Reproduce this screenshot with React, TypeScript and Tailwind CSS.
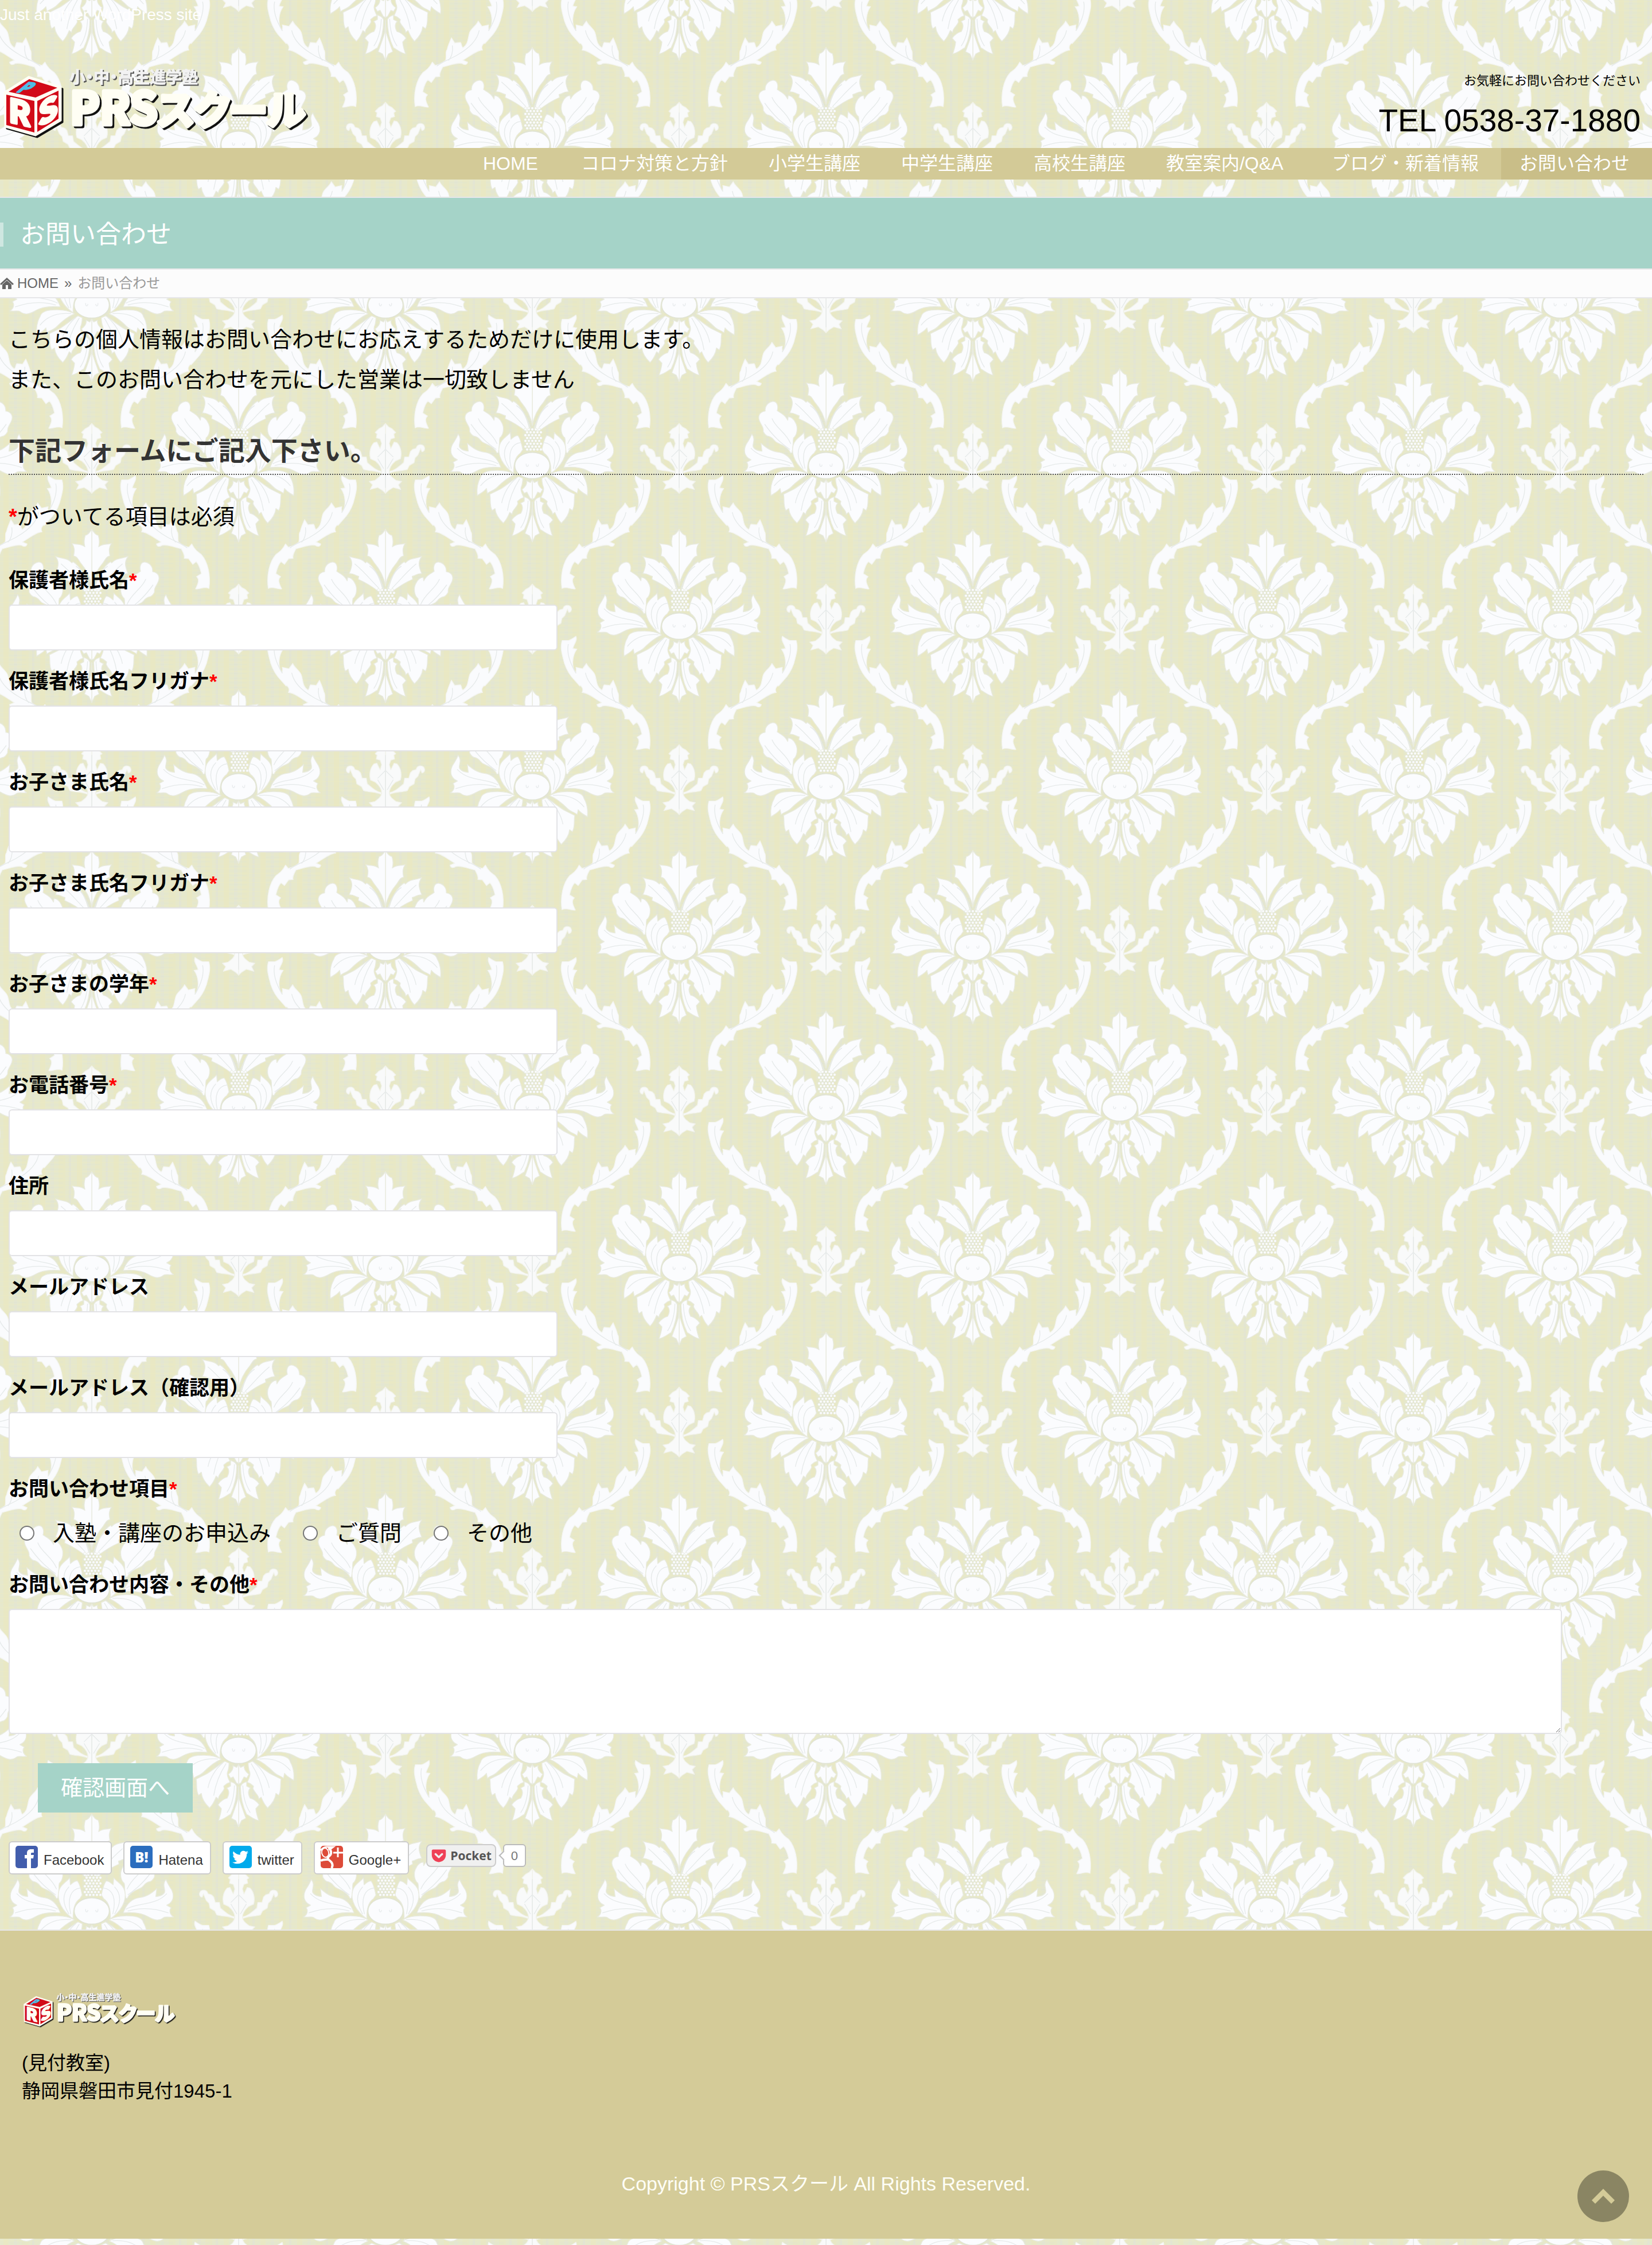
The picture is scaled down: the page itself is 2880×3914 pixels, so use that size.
import React from "react";
import { FaGetPocket, FaTwitter } from "react-icons/fa";

/* ---------- Damask wallpaper ---------- */

const petals = [
  "M0 38 C10 55 20 68 34 70 C40 90 42 108 36 130 C58 112 78 120 103 112 C88 135 90 150 95 178 C76 180 72 196 60 212 C36 240 8 285 0 335 Z",
  "M14 355 C30 290 55 235 98 208 L104 214 C126 188 160 192 190 180 C172 205 170 225 190 270 C165 268 158 282 140 284 L142 300 C100 318 60 345 30 368 Z",
  "M178 478 C168 440 175 420 170 400 C150 385 145 345 160 320 C170 300 185 290 198 290 L200 308 C215 280 230 275 255 258 C248 235 255 208 280 210 C305 215 320 235 318 260 C350 265 360 290 345 318 C335 340 325 345 328 368 C318 385 310 392 300 392 C270 400 275 420 250 428 C220 440 195 455 185 480 Z",
  "M168 545 C185 505 210 480 250 475 C290 470 315 450 340 428 L335 470 C355 468 370 465 380 450 C388 430 365 410 388 380 C395 400 405 415 418 435 C432 465 425 490 408 505 L392 515 L415 528 C402 545 410 565 428 576 C400 580 385 572 375 580 C350 600 325 592 300 578 C265 556 220 550 165 555 Z",
  "M92 590 C130 570 175 568 215 572 C245 575 265 585 270 605 C285 630 292 665 288 702 C270 690 250 680 240 665 L235 690 C215 676 195 672 185 660 C160 635 125 605 92 592 Z",
  "M72 602 C110 625 150 660 175 672 L222 695 C216 730 225 750 210 780 L195 770 C192 800 175 825 152 846 C135 830 128 815 118 790 L105 800 C108 780 85 770 75 745 L78 732 L60 718 L45 712 C55 690 66 670 55 650 C50 630 50 620 50 612 Z",
  "M10 735 C15 715 30 715 42 708 L42 732 L62 742 C45 758 52 780 60 795 C80 800 95 812 108 830 L90 850 C92 875 98 890 105 912 C75 905 55 885 42 880 C22 840 10 790 10 735 Z",
  "M0 735 L4 800 C12 830 26 865 38 900 L15 912 L0 945 Z",
  "M0 618 L10 634 L30 625 C26 642 34 655 54 670 L42 690 L28 684 L12 715 L0 722 Z",
  "M50 462 C56 430 66 400 75 388 C92 388 100 400 112 408 L115 372 C135 395 165 410 172 440 C185 490 155 545 98 586 C98 540 92 500 62 480 Z",
];

const veins = [
  "M10 350 C30 290 48 255 82 232",
  "M36 345 C80 300 110 262 160 220",
  "M185 430 C210 370 262 350 282 300",
  "M190 460 C230 430 270 400 320 330",
  "M180 535 C240 500 330 520 392 455",
  "M190 545 C260 525 330 530 400 555",
  "M110 590 C170 585 230 600 270 650",
  "M84 612 C120 640 150 690 160 740",
  "M66 615 C95 660 120 720 130 780",
  "M60 425 C110 430 130 480 110 560",
  "M120 420 C158 460 150 510 120 560",
  "M30 545 C38 535 40 520 36 510",
  "M22 730 C24 790 40 840 60 870",
];

const scroll =
  "M540 598 C560 612 570 618 580 620 L612 620 C625 660 610 700 600 740 C590 770 575 800 545 830 L520 858 C520 850 495 870 508 892 C480 892 440 925 405 945 L430 955 C425 972 412 970 400 962 C370 955 330 975 300 980 C290 1000 280 1015 285 1030 L262 1032 L240 1062 L222 1048 C205 1065 200 1090 195 1110 L220 1126 C205 1140 208 1155 225 1190 C200 1195 185 1175 155 1188 C145 1120 160 1050 195 1010 C215 995 230 985 245 955 L260 972 C280 970 295 960 315 945 C320 920 312 900 322 890 C328 865 335 850 345 828 L362 855 L392 852 C400 860 395 870 405 880 C435 860 430 830 440 800 C450 775 475 765 485 740 L505 768 L540 760 C536 770 540 780 540 790 C565 760 560 700 535 665 L556 662 C552 640 530 620 540 598 Z";

const crest = [
  "M0 1165 L16 1182 L34 1192 L54 1212 L44 1220 L48 1240 L28 1246 L20 1270 L28 1296 L45 1262 L60 1265 C85 1290 85 1330 78 1350 L52 1362 C30 1380 20 1400 20 1418 C22 1440 40 1450 55 1462 L85 1468 L68 1486 L80 1510 L40 1500 L15 1516 L0 1530 Z",
  "M22 1415 C50 1410 70 1390 95 1370 L100 1340 L122 1340 L130 1312 L142 1300 L160 1295 C165 1275 185 1270 200 1282 C212 1300 200 1315 190 1312 L184 1296 L170 1330 L155 1345 L150 1370 L125 1385 L115 1405 C85 1415 50 1410 22 1425 Z",
];

const seeds = [0, 1, 2, 3, 4, 5, 6, 7].flatMap((row) =>
  [-2, -1, 0, 1, 2].map((col) => [col * 18 + (row % 2 ? 9 : 0), 356 + row * 15])
);

const motifSpots = [
  [160, 350],
  [672, 350],
  [160, -210],
  [672, -210],
  [416, 70],
  [-96, 70],
  [416, -490],
  [-96, -490],
];

function HalfMotif() {
  return (
    <g strokeLinejoin="round">
      {petals.map((d) => (
        <path key={d} d={d} fill="#fbfcfe" stroke="#e9ebdf" strokeWidth="4" />
      ))}
      <path d={scroll} fill="#fafbfd" stroke="#f4f5f0" strokeWidth="4" />
      {crest.map((d) => (
        <path key={d} d={d} fill="#f9fafa" stroke="#f2f3ea" strokeWidth="4" />
      ))}
      <g fill="none" stroke="#e6eaea" strokeWidth="4" strokeLinecap="round">
        {veins.map((d) => (
          <path key={d} d={d} />
        ))}
        <path d="M580 640 C590 690 570 740 540 790" />
        <path d="M490 790 C480 840 440 880 380 915 C340 940 300 950 270 975" />
        <path d="M350 870 C355 900 345 930 330 945" />
        <path d="M0 1220 L0 1500 M0 1300 L40 1340 M10 1400 L40 1350" />
      </g>
    </g>
  );
}

function Wallpaper() {
  return (
    <svg className="absolute inset-0 -z-10 size-full" aria-hidden="true">
      <defs>
        <g id="damask">
          <HalfMotif />
          <g transform="scale(-1 1)">
            <HalfMotif />
          </g>
          <ellipse cx="0" cy="545" rx="92" ry="69" fill="#fbfcfe" stroke="#e1e4d4" strokeWidth="5" />
          <path d="M-32 535 C-34 550 -24 558 -20 540 M32 535 C34 550 24 558 20 540" fill="none" stroke="#e9ecee" strokeWidth="4" />
          {seeds.map(([x, y]) => (
            <circle key={`${x}-${y}`} cx={x} cy={y} r="7" fill="#fbfcfe" stroke="#e3e6d6" strokeWidth="2" />
          ))}
        </g>
        <pattern id="weave" width="64" height="8" patternUnits="userSpaceOnUse">
          <rect width="64" height="8" fill="#e6e8cc" />
          <rect x="6" width="9" height="8" fill="#e9e8c4" />
          <rect x="24" width="6" height="8" fill="#e4e6d2" />
          <rect x="38" width="12" height="8" fill="#e8e8c6" />
          <rect x="56" width="4" height="8" fill="#e3e5d3" />
          <rect y="2" width="64" height="1" fill="#ebeabf" opacity="0.5" />
          <rect x="16" y="6" width="30" height="1" fill="#e0e4d0" opacity="0.6" />
        </pattern>
        <pattern id="wallpaper" width="512" height="560" patternUnits="userSpaceOnUse">
          <rect width="512" height="560" fill="url(#weave)" />
          {motifSpots.map(([x, y]) => (
            <use key={`${x},${y}`} href="#damask" transform={`translate(${x} ${y}) scale(0.3333)`} />
          ))}
        </pattern>
      </defs>
      <rect width="100%" height="100%" fill="url(#wallpaper)" />
    </svg>
  );
}

/* ---------- Logo ---------- */

function Logo({ className }: { className: string }) {
  return (
    <svg viewBox="0 0 560 150" className={className} role="img" aria-label="小・中・高生進学塾 PRSスクール">
      <g className="drop-shadow-[3px_3px_0px_#111111]">
        <path d="M50 34 L106 52 L106 110 L62 136 L9 121 L8 61 Z" fill="#fffef4" stroke="#fffef4" strokeWidth="3" strokeLinejoin="round" />
      </g>
      <path d="M51 38 L100 53 L62 70 L15 60 Z" fill="#d20a18" />
      <path d="M11 65 L60 76 L60 131 L11 118 Z" fill="#d20a18" />
      <path d="M65 76 L102 58 L102 107 L65 130 Z" fill="#d20a18" />
      <g className="font-['Noto_Sans_CJK_JP',sans-serif] font-bold" strokeLinejoin="round">
        <text transform="translate(28 60) rotate(8) skewX(-42)" fontSize="26" fill="#4fbde6" stroke="#4fbde6" strokeWidth="3">P</text>
        <text transform="translate(15 112) skewY(13)" fontSize="56" fill="#fffef4" stroke="#fffef4" strokeWidth="5">R</text>
        <text transform="translate(67 121) skewY(-28)" fontSize="54" fill="#fffef4" stroke="#fffef4" strokeWidth="5">S</text>
      </g>
      <g className="font-['Noto_Sans_CJK_JP',sans-serif] font-bold [font-feature-settings:'palt']">
        <text x="121" y="45" fontSize="28" fill="#f2f2f2" stroke="#f2f2f2" strokeWidth="1" className="drop-shadow-[2px_2px_0px_#555555]">
          小・中・高生進学塾
        </text>
        <g className="drop-shadow-[3px_3px_0px_#111111]">
          <text x="122" y="117" fontSize="78" fill="#fffef4" stroke="#fffef4" strokeWidth="7" strokeLinejoin="round">
            PRS<tspan fontSize="68">スクール</tspan>
          </text>
        </g>
      </g>
    </svg>
  );
}

/* ---------- Icons ---------- */

function HomeIcon() {
  return (
    <svg viewBox="0 0 24 20" className="h-5 w-6 fill-[#666666]" aria-hidden="true">
      <path d="M12 0 L24 11 L22 13 L12 4 L2 13 L0 11 Z" />
      <path d="M4 12 L12 5 L20 12 L20 20 L14 20 L14 13 L10 13 L10 20 L4 20 Z" />
    </svg>
  );
}

function FacebookIcon() {
  return (
    <svg viewBox="0 0 39 39" className="size-[39px]" aria-hidden="true">
      <rect width="39" height="39" rx="5" fill="#425dac" />
      <path d="M20 39 V22 H16 V16 H20 V13 C20 8 23 6 27 6 H32 V12 H29 C27 12 27 13 27 14 V16 H32 L31 22 H27 V39 Z" fill="#fff" />
    </svg>
  );
}

function HatenaIcon() {
  return (
    <span className="flex size-[39px] items-center justify-center rounded-[5px] bg-[#2b6dbe] font-['Open_Sans',sans-serif] text-2xl font-extrabold text-white" aria-hidden="true">
      B!
    </span>
  );
}

function TwitterIcon() {
  return (
    <span className="flex size-[39px] items-center justify-center rounded-[5px] bg-[#00aaec] text-[28px] text-white" aria-hidden="true">
      <FaTwitter />
    </span>
  );
}

function GooglePlusIcon() {
  return (
    <svg viewBox="0 0 39 39" className="size-[39px]" aria-hidden="true">
      <rect width="39" height="39" rx="5" fill="#dd4b39" />
      <g fill="none" stroke="#fff">
        <path d="M0 8 C3 4 7 2 12 2 H22 L18 5 H13" strokeWidth="3" />
        <ellipse cx="8" cy="12" rx="6" ry="8" transform="rotate(-14 8 12)" strokeWidth="2" />
        <path d="M14 4 C20 9 19 15 15 18 C11 21 12 23 16 26 C21 30 22 34 19 39" strokeWidth="4" />
        <path d="M0 26 C5 23 9 24 14 24" strokeWidth="4" />
        <path d="M30 3 V20 M22 12 H39" strokeWidth="3" />
      </g>
    </svg>
  );
}

/* ---------- Data ---------- */

const navItems = [
  { label: "HOME", size: "w-[171px]" },
  { label: "コロナ対策と方針", size: "" },
  { label: "小学生講座", size: "" },
  { label: "中学生講座", size: "" },
  { label: "高校生講座", size: "" },
  { label: "教室案内/Q&A", size: "w-[289px]" },
  { label: "ブログ・新着情報", size: "" },
  { label: "お問い合わせ", size: "bg-[#c9be88]" },
];

const fields = [
  { id: "guardian", label: "保護者様氏名", required: true, type: "text" },
  { id: "guardian-kana", label: "保護者様氏名フリガナ", required: true, type: "text" },
  { id: "child", label: "お子さま氏名", required: true, type: "text" },
  { id: "child-kana", label: "お子さま氏名フリガナ", required: true, type: "text" },
  { id: "grade", label: "お子さまの学年", required: true, type: "text" },
  { id: "phone", label: "お電話番号", required: true, type: "tel" },
  { id: "address", label: "住所", required: false, type: "text" },
  { id: "email", label: "メールアドレス", required: false, type: "email" },
  { id: "email-confirm", label: "メールアドレス（確認用）", required: false, type: "email" },
];

const topics = ["入塾・講座のお申込み", "ご質問", "その他"];

const shares = [
  { label: "Facebook", Icon: FacebookIcon },
  { label: "Hatena", Icon: HatenaIcon },
  { label: "twitter", Icon: TwitterIcon },
  { label: "Google+", Icon: GooglePlusIcon },
];

const Required = () => <span className="font-bold text-[#ff0000]">*</span>;

/* ---------- Page ---------- */

export default function App() {
  return (
    <div className="relative isolate overflow-hidden font-['Liberation_Sans','Noto_Sans_CJK_JP',sans-serif] text-black">
      <Wallpaper />

      <header>
        <p className="pt-2 text-[28px] leading-9 text-white">Just another WordPress site</p>
        <div className="flex items-start justify-between">
          <a href="#" className="mt-14 mb-2">
            <Logo className="h-[150px] w-[560px]" />
          </a>
          <div className="pt-[82px] pr-5 text-right">
            <p className="text-[22px] leading-[30px]">お気軽にお問い合わせください</p>
            <p className="mt-6 text-[55px] leading-[60px]">TEL 0538-37-1880</p>
          </div>
        </div>
        <nav className="flex justify-end bg-[#d3ca97]">
          {navItems.map((item) => (
            <a key={item.label} href="#" className={`pr-[39px] pl-8 text-[32px] leading-[55px] whitespace-nowrap text-white ${item.size}`}>
              {item.label}
            </a>
          ))}
        </nav>
      </header>

      <div className="mt-[30px] border-y-2 border-[#e7e7e9] bg-[#a5d3c8] pt-[33px] pb-7">
        <h1 className="flex items-center text-[44px] leading-[62px] text-white">
          <span className="mr-[29px] h-[42px] w-1.5 bg-[#cfe7e1]" />
          お問い合わせ
        </h1>
      </div>
      <div className="flex h-[50px] items-center border-b-2 border-[#e7e7e9] bg-[#fcfcfc] text-2xl leading-9 text-[#999999]">
        <HomeIcon />
        <a href="#" className="ml-1.5 text-[#666666]">HOME</a>
        <span className="mx-2.5 text-[#666666]">»</span>
        <span>お問い合わせ</span>
      </div>

      <main className="px-[15px] pt-[37px]">
        <p className="text-[38px] leading-[70px]">
          こちらの個人情報はお問い合わせにお応えするためだけに使用します。
          <br />
          また、このお問い合わせを元にした営業は一切致しません
        </p>
        <h2 className="mt-[59px] border-b-2 border-dotted border-[#555555] pb-2.5 text-[46px] leading-[60px] font-bold text-[#333333]">
          下記フォームにご記入下さい。
        </h2>
        <p className="mt-[43px] text-[38px] leading-[60px]">
          <Required />
          がついてる項目は必須
        </p>

        <form className="mt-14" onSubmit={(e) => e.preventDefault()}>
          <div className="flex flex-col gap-[29px]">
            {fields.map((f) => (
              <div key={f.id}>
                <label htmlFor={f.id} className="block text-[35px] leading-[50px] font-bold">
                  {f.label}
                  {f.required && <Required />}
                </label>
                <input
                  id={f.id}
                  type={f.type}
                  className="mt-[17px] block h-20 w-full max-w-[957px] rounded-md border-2 border-[#e3e3e6] bg-white px-4 text-[35px]"
                />
              </div>
            ))}
          </div>

          <fieldset className="mt-[29px]">
            <legend className="block text-[35px] leading-[50px] font-bold">
              お問い合わせ項目
              <Required />
            </legend>
            <div className="mt-[22px] flex gap-14 pl-[19px]">
              {topics.map((t) => (
                <label key={t} className="flex items-center gap-8 text-[38px] leading-[60px]">
                  <input type="radio" name="topic" className="size-[26px] appearance-none rounded-full border-2 border-[#767676] bg-white" />
                  {t}
                </label>
              ))}
            </div>
          </fieldset>

          <label htmlFor="message" className="mt-[35px] block text-[35px] leading-[50px] font-bold">
            お問い合わせ内容・その他
            <Required />
          </label>
          <textarea
            id="message"
            className="mt-[17px] block h-[218px] w-[95%] resize rounded-md border-2 border-[#e3e3e6] bg-white px-4 py-2 text-[35px]"
          />
          <button type="submit" className="mt-[51px] ml-[51px] bg-[#a5d3c8] px-10 text-[38px] leading-[86px] text-white">
            確認画面へ
          </button>
        </form>

        <div className="mt-[50px] flex items-start gap-5 pb-24">
          {shares.map(({ label, Icon }) => (
            <a key={label} href="#" className="flex h-[58px] gap-2.5 rounded-md border-2 border-[#cccccc] bg-white pt-1.5 pr-3 pl-2.5 text-2xl leading-[50px] text-[#333333]">
              <Icon />
              {label}
            </a>
          ))}
          <div className="mt-[5px] ml-2.5 flex items-center gap-3">
            <a href="#" className="flex h-10 items-center gap-1.5 rounded-lg border-2 border-[#cccccc] bg-[#f0f0f0] px-1.5 font-['Open_Sans',sans-serif] text-[21px] leading-9 font-bold text-[#555555]">
              <FaGetPocket className="size-7 text-[#ef4056]" />
              Pocket
            </a>
            <span className="relative flex h-10 w-10 items-center justify-center rounded-md border-2 border-[#bbbbbb] bg-white text-[22px] text-[#777777]">
              <span className="absolute top-3 -left-[7px] size-3 rotate-45 border-b-2 border-l-2 border-[#bbbbbb] bg-white" />
              0
            </span>
          </div>
        </div>
      </main>

      <footer className="relative mb-[11px] border-t-2 border-[#e7e7e9] bg-[#d4cb98] px-[38px] pt-[98px] pb-[71px]">
        <Logo className="h-[75px] w-[280px]" />
        <address className="mt-[33px] text-[33px] leading-[49px] not-italic">
          (見付教室)
          <br />
          静岡県磐田市見付1945-1
        </address>
        <p className="mt-28 text-center text-[34px] leading-[50px] text-[#fefef6]">
          Copyright © PRSスクール All Rights Reserved.
        </p>
        <a href="#" aria-label="ページの先頭へ" className="absolute right-10 bottom-[29px] flex size-[90px] items-center justify-center rounded-full bg-[#8a8563]">
          <svg viewBox="0 0 40 26" className="h-[26px] w-10 fill-[#d4cb98]" aria-hidden="true">
            <path d="M20 0 L40 20 L34 26 L20 12 L6 26 L0 20 Z" />
          </svg>
        </a>
      </footer>
    </div>
  );
}
